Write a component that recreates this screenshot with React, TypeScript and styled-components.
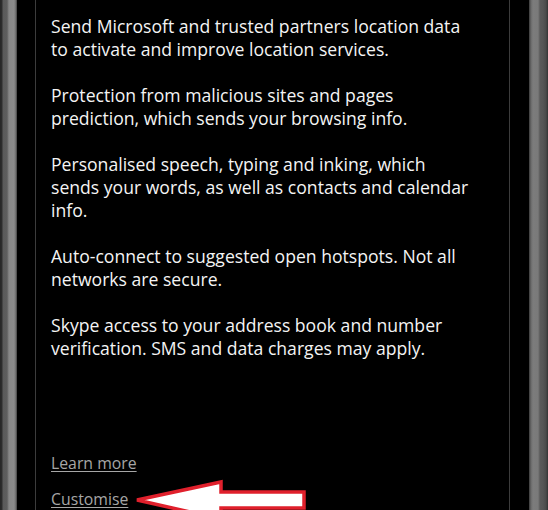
import React from "react";
import styled, { createGlobalStyle } from "styled-components";

const Global = createGlobalStyle`
  html, body { margin: 0; padding: 0; background: #000; }
  body { width: 548px; height: 510px; overflow: hidden; }
`;

const Frame = styled.div`
  position: relative;
  display: flex;
  width: 548px;
  height: 510px;
  background: #000;
  overflow: hidden;
`;

const Bezel = styled.div<{ $side: "left" | "right" }>`
  flex: none;
  width: ${(p) => (p.$side === "left" ? 17 : 19)}px;
  background: ${(p) =>
    p.$side === "left"
      ? "linear-gradient(to right, #262626 0px, #2e2e2e 2px, #5a5a5a 3px, #5e5e5e 7px, #888 9px, #8c8c8c 14px, #6a6a6a 16px, #3a3a3a 17px)"
      : "linear-gradient(to right, #3a3a3a 0px, #6a6a6a 2px, #7c7c7c 4px, #7a7a7a 9px, #5a5a5a 11px, #555 14px, #4a4a4a 17px, #333 19px)"};
`;

const Gutter = styled.div<{ $w: number }>`
  flex: none;
  width: ${(p) => p.$w}px;
  background: #000;
`;

const Rule = styled.div`
  flex: none;
  width: 1px;
  background: #3c3c3c;
`;

const Screen = styled.main`
  flex: 1;
  display: flex;
  flex-direction: column;
  padding: 15px 0 0 15px;
  font-family: "Open Sans", "Noto Sans", "DejaVu Sans", sans-serif;
  font-size: 17.6px;
  line-height: 23px;
  color: #f4f4f4;
`;

const Paragraph = styled.p`
  margin: 0 0 23px 0;
`;

const Line = styled.span`
  display: block;
  white-space: nowrap;
`;

const Links = styled.div`
  display: flex;
  flex-direction: column;
  gap: 14px;
  margin-top: 69px;
`;

const Link = styled.a`
  display: block;
  color: #a6a6a6;
  font-size: 15.8px;
  line-height: 22px;
  text-decoration: underline;
  text-underline-offset: 2px;
  text-decoration-thickness: 1px;
  width: max-content;
`;

const Arrow = styled.svg`
  position: absolute;
  left: 0;
  top: 0;
  pointer-events: none;
`;

const paragraphs: string[][] = [
  [
    "Send Microsoft and trusted partners location data",
    "to activate and improve location services.",
  ],
  [
    "Protection from malicious sites and pages",
    "prediction, which sends your browsing info.",
  ],
  [
    "Personalised speech, typing and inking, which",
    "sends your words, as well as contacts and calendar",
    "info.",
  ],
  [
    "Auto-connect to suggested open hotspots. Not all",
    "networks are secure.",
  ],
  [
    "Skype access to your address book and number",
    "verification. SMS and data charges may apply.",
  ],
];

export default function App() {
  return (
    <>
      <Global />
      <Frame>
        <Bezel $side="left" />
        <Gutter $w={18} />
        <Rule />
        <Screen>
          {paragraphs.map((lines, i) => (
            <Paragraph key={i}>
              {lines.map((l, j) => (
                <Line key={j}>{l}</Line>
              ))}
            </Paragraph>
          ))}
          <Links>
            <Link href="#">Learn more</Link>
            <Link href="#">Customise</Link>
          </Links>
        </Screen>
        <Rule />
        <Gutter $w={19} />
        <Bezel $side="right" />
        <Arrow width="548" height="510" viewBox="0 0 548 510">
          <polygon
            points="137,500 221,482 221,492 304,492 304,508 221,508 221,519"
            fill="#ffffff"
            stroke="#e0202c"
            strokeWidth="3.5"
            strokeLinejoin="miter"
          />
        </Arrow>
      </Frame>
    </>
  );
}
